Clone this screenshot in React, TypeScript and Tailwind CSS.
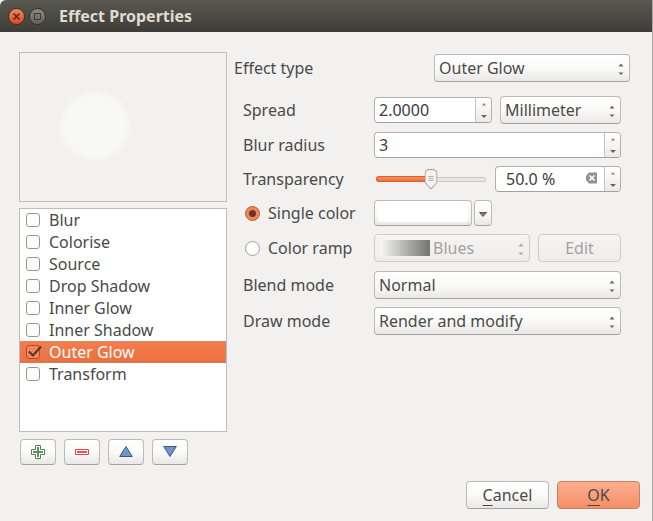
import { useState, type ReactNode } from "react";

const raised =
  "rounded-[4px] border border-[#bdbbb8] border-b-[#a3a19e] bg-linear-to-b from-white via-[#fafaf9] to-[#eae8e7]";
const disabledLook = "rounded-[4px] border border-[#cfcdcb] bg-linear-to-b from-[#f5f4f3] to-[#efedec] text-[#a3a19f]";

function Arrows({ muted = false }: { muted?: boolean }) {
  return (
    <svg
      viewBox="0 0 6 12"
      className={"pointer-events-none absolute top-[9px] right-[6px] h-3 w-[6px] " + (muted ? "fill-[#aaa8a6]" : "fill-[#6b6967]")}
      aria-hidden="true"
    >
      <path d="M3 .5 5.500 3.500h-5ZM.5 9.500h5L3 12Z" />
    </svg>
  );
}

type DropDownProps = { id: string; options: string[]; label?: string; className: string };

function DropDown({ id, options, label, className }: DropDownProps) {
  return (
    <div className={"relative h-7 " + className}>
      <select id={id} aria-label={label} className={"h-7 w-full appearance-none pr-4 pl-1 outline-none " + raised}>
        {options.map((o) => (
          <option key={o}>{o}</option>
        ))}
      </select>
      <Arrows />
    </div>
  );
}

type SpinProps = { id: string; value: string; label?: string; className: string; inset?: boolean; onClear?: () => void };

function SpinBox({ id, value, label, className, inset = false, onClear }: SpinProps) {
  return (
    <div className={"flex h-[26px] overflow-hidden rounded-[4px] border border-[#b3b1ae] border-b-[#a3a19e] bg-white " + className}>
      <input
        id={id}
        aria-label={label}
        key={value}
        defaultValue={value}
        className={"w-0 min-w-0 flex-1 bg-transparent text-[#3c3c3c] outline-none " + (inset ? "pl-[10px]" : "pl-1")}
      />
      {onClear && (
        <button type="button" aria-label="Reset" onClick={onClear} className="mr-[7px] flex w-[11px] items-start pt-[5px]">
          <svg viewBox="0 0 11 12" className="h-3 w-[11px]" aria-hidden="true">
            <path d="M3 .5h8v11H3L0 8V4Z" fill="#929292" />
            <path d="m3.500 3.500 5 5m0-5-5 5" stroke="#fff" strokeWidth="1.700" />
          </svg>
        </button>
      )}
      <div className="flex w-4 flex-col border-l border-[#c6c4c2] bg-linear-to-b from-white to-[#eceae9]">
        <button type="button" aria-label="Increase" className="flex flex-1 items-center justify-center">
          <svg viewBox="0 0 6 3" className="h-[3px] w-[6px]" fill="#858381" aria-hidden="true">
            <path d="M3 0 5 2.500H1Z" />
          </svg>
        </button>
        <button type="button" aria-label="Decrease" className="flex flex-1 items-center justify-center">
          <svg viewBox="0 0 6 3" className="h-[3px] w-[6px]" fill="#666462" aria-hidden="true">
            <path d="M0 0h6L3 3Z" />
          </svg>
        </button>
      </div>
    </div>
  );
}

function Row({ label, children }: { label: ReactNode; children: ReactNode }) {
  return (
    <div className="flex items-center">
      <div className="w-[131px] shrink-0 leading-6">{label}</div>
      <div className="flex min-w-0 flex-1 items-center">{children}</div>
    </div>
  );
}

function Slider({ value, onChange }: { value: number; onChange: (v: number) => void }) {
  return (
    <div className="relative mx-[2px] h-6 min-w-0 flex-1">
      <div className="absolute inset-x-0 top-[10px] h-[5px] overflow-hidden rounded-full border border-[#cbc9c6] bg-[#e9e7e4]">
        <div className="h-full bg-[#f5804f] shadow-[0_0_0_1px_#d9622f]" style={{ width: `${value}%` }} />
      </div>
      <div
        className="absolute top-[9px] left-0 h-[6px] rounded-l-full border border-r-0 border-[#d2622f] bg-linear-to-b from-[#f98d60] to-[#ee6f3b]"
        style={{ width: `${value}%` }}
      />
      <svg
        viewBox="0 0 13 21"
        className="absolute top-[2px] h-[21px] w-[13px] -translate-x-1/2"
        style={{ left: `${value}%` }}
        aria-hidden="true"
      >
        <path d="M.5 5.500Q.5.500 5 .5h3q4.500 0 4.500 5v8L6.500 20 .5 13.500Z" fill="#f4f3f1" stroke="#969491" />
        <path d="M4 7.500h5M4 9.500h5M4 11.500h5" stroke="#b3b1ae" />
      </svg>
      <input
        id="transparency"
        type="range"
        min={0}
        max={100}
        value={value}
        onChange={(e) => onChange(Number(e.target.value))}
        className="absolute inset-0 h-full w-full opacity-0"
      />
    </div>
  );
}

const effects = ["Blur", "Colorise", "Source", "Drop Shadow", "Inner Glow", "Inner Shadow", "Outer Glow", "Transform"];

function EffectItem({ name, selected }: { name: string; selected: boolean }) {
  return (
    <li className={selected ? "bg-linear-to-b from-[#f47d4e] to-[#eb6f3e] text-white" : ""}>
      <label className="flex h-[22px] items-center pl-[6px]">
        <span className="relative h-[14px] w-[14px] shrink-0">
          <input
            type="checkbox"
            defaultChecked={selected}
            className="peer block h-[14px] w-[14px] appearance-none rounded-[3px] border border-[#989693] bg-white checked:border-[#a84f2b] checked:bg-[#f0875e]"
          />
          <svg
            viewBox="0 0 16 14"
            className="pointer-events-none absolute top-0 left-0 hidden h-[14px] w-4 peer-checked:block"
            aria-hidden="true"
          >
            <path d="M3 6.500 7 10.500 15 1.500" fill="none" stroke="#5d3626" strokeWidth="2.200" />
          </svg>
        </span>
        <span className={"ml-[6px] h-[22px] flex-1 border pl-[2px] leading-5 " + (selected ? "border-dotted border-[#a99a86]" : "border-transparent")}>
          {name}
        </span>
      </label>
    </li>
  );
}

function ToolButton({ label, children }: { label: string; children: ReactNode }) {
  return (
    <button type="button" aria-label={label} className={"flex h-[26px] w-9 items-center justify-center " + raised}>
      <svg viewBox="0 0 14 14" className="h-[14px] w-[14px]" aria-hidden="true">
        {children}
      </svg>
    </button>
  );
}

const radioLook =
  "h-[15px] w-[15px] shrink-0 appearance-none rounded-full border border-[#a09e9b] bg-white checked:border-[#b9562f] checked:bg-[radial-gradient(circle,#63382a_0_3px,#f58356_4px)]";

export default function App() {
  const [transparency, setTransparency] = useState(50);

  return (
    <div className="flex min-h-screen flex-col border-r border-[#a9a7a4] bg-[#f2f1ef] font-['Noto_Sans','Open_Sans',sans-serif] text-base text-[#4a4a48]">
      <header className="flex h-8 items-center rounded-tl-[6px] bg-linear-to-b from-[#5b5a50] to-[#3d3c37] pl-2">
        <button type="button" aria-label="Close" className="h-[17px] w-[17px] rounded-full border border-[#31302c] bg-linear-to-b from-[#f5835d] to-[#df4b1b]">
          <svg viewBox="0 0 15 15" className="h-[15px] w-[15px]" aria-hidden="true">
            <path d="m4.500 4.500 6 6m0-6-6 6" stroke="#48281c" strokeWidth="1.500" />
          </svg>
        </button>
        <button type="button" aria-label="Maximize" className="ml-1 h-[17px] w-[17px] rounded-full border border-[#31302c] bg-linear-to-b from-[#8a8981] to-[#62615b]">
          <svg viewBox="0 0 15 15" className="h-[15px] w-[15px]" aria-hidden="true">
            <path d="M4.500 4.500h6v6h-6Z" fill="none" stroke="#3a3935" />
          </svg>
        </button>
        <h1 className="ml-[13px] text-base leading-6 font-bold text-[#dfdbd2]">Effect Properties</h1>
      </header>

      <main className="flex flex-1 pt-5 pl-[19px]">
        <section className="w-[208px] shrink-0">
          <div className="h-[150px] border border-[#bfbebc] pt-9 pl-[38px]">
            <div className="h-[74px] w-[74px] rounded-full bg-[radial-gradient(circle,#f8f8f6_0_30px,#f2f1ef_37px)]" />
          </div>
          <ul className="mt-[6px] h-[224px] border border-[#bfbebc] bg-white">
            {effects.map((name) => (
              <EffectItem key={name} name={name} selected={name === "Outer Glow"} />
            ))}
          </ul>
          <div className="mt-[7px] flex gap-2 pl-px">
            <ToolButton label="Add effect">
              <path d="M4.500.500h5v4h4v5h-4v4h-5v-4h-4v-5h4Z" fill="#fff" stroke="#528252" />
              <path d="M7 2v10M2 7h10" stroke="#5b915b" strokeWidth="2" />
            </ToolButton>
            <ToolButton label="Remove effect">
              <path d="M.5 4.500h13v5H.5Z" fill="#fff" stroke="#e5474d" />
              <path d="M2 7h10" stroke="#ef4f55" strokeWidth="2" />
            </ToolButton>
            <ToolButton label="Move up">
              <path d="M7 1.500 13.300 11.500H.7Z" fill="#6d98c9" stroke="#3f5879" />
            </ToolButton>
            <ToolButton label="Move down">
              <path d="M7 11.500 13.300 1.500H.7Z" fill="#6d98c9" stroke="#3f5879" />
            </ToolButton>
          </div>
        </section>

        <form className="min-w-0 flex-1 pt-[2px] pl-[7px]">
          <div className="flex items-center pr-[22px]">
            <label htmlFor="type" className="w-[200px] shrink-0">
              Effect type
            </label>
            <DropDown id="type" options={["Outer Glow", "Inner Glow", "Blur"]} className="flex-1" />
          </div>

          <div className="mt-[14px] flex flex-col gap-2 pr-[31px] pl-[9px]">
            <Row label={<label htmlFor="spread">Spread</label>}>
              <SpinBox id="spread" value="2.0000" className="w-[118px]" />
              <DropDown id="unit" label="Spread unit" options={["Millimeter", "Map unit"]} className="ml-2 flex-1" />
            </Row>
            <Row label={<label htmlFor="blur">Blur radius</label>}>
              <SpinBox id="blur" value="3" className="flex-1" />
            </Row>
            <Row label={<label htmlFor="transparency">Transparency</label>}>
              <Slider value={transparency} onChange={setTransparency} />
              <SpinBox
                id="percent"
                label="Transparency percent"
                value={`${transparency.toFixed(1)} %`}
                inset
                onClear={() => setTransparency(0)}
                className="ml-[7px] w-[126px]"
              />
            </Row>
            <Row
              label={
                <label className="flex items-center gap-2 pl-[2px]">
                  <input type="radio" name="color" defaultChecked className={radioLook} />
                  Single color
                </label>
              }
            >
              <button type="button" aria-label="Choose color" className={"h-[26px] w-[98px] p-[3px] " + raised}>
                <span className="block h-full rounded-[2px] bg-white" />
              </button>
              <button type="button" aria-label="Color menu" className={"ml-[2px] flex h-[26px] w-[18px] items-center justify-center " + raised}>
                <svg viewBox="0 0 8 5" className="mt-[2px] h-[5px] w-2" aria-hidden="true">
                  <path d="M.5.500h7L4 4.500Z" fill="#807e7c" stroke="#555" />
                </svg>
              </button>
            </Row>
            <div className="pb-px">
              <Row
                label={
                  <label className="flex items-center gap-2 pl-[2px]">
                    <input type="radio" name="color" className={radioLook} />
                    Color ramp
                  </label>
                }
              >
                <div className="relative h-7 flex-1">
                  <select disabled aria-label="Color ramp" className={"h-7 w-full appearance-none pl-[58px] opacity-100 " + disabledLook}>
                    <option>Blues</option>
                  </select>
                  <span className="pointer-events-none absolute top-[6px] left-[6px] h-4 w-[50px] bg-linear-to-r from-[#f8f8f7] to-[#747472]" />
                  <Arrows muted />
                </div>
                <button type="button" disabled className={"ml-2 h-7 w-[83px] " + disabledLook}>
                  Edit
                </button>
              </Row>
            </div>
            <Row label={<label htmlFor="blend">Blend mode</label>}>
              <DropDown id="blend" options={["Normal", "Multiply", "Screen"]} className="flex-1" />
            </Row>
            <Row label={<label htmlFor="draw">Draw mode</label>}>
              <DropDown id="draw" options={["Render and modify", "Render only", "Modifier only"]} className="flex-1" />
            </Row>
          </div>
        </form>
      </main>

      <footer className="flex justify-end gap-2 pt-4 pr-3 pb-3">
        <button type="button" className={"h-7 w-[83px] " + raised}>
          <span className="underline underline-offset-4">C</span>ancel
        </button>
        <button type="button" className="h-7 w-[83px] rounded-[4px] border border-[#c9805f] bg-linear-to-b from-[#fcae90] to-[#f48e66]">
          <span className="underline underline-offset-4">O</span>K
        </button>
      </footer>
    </div>
  );
}
